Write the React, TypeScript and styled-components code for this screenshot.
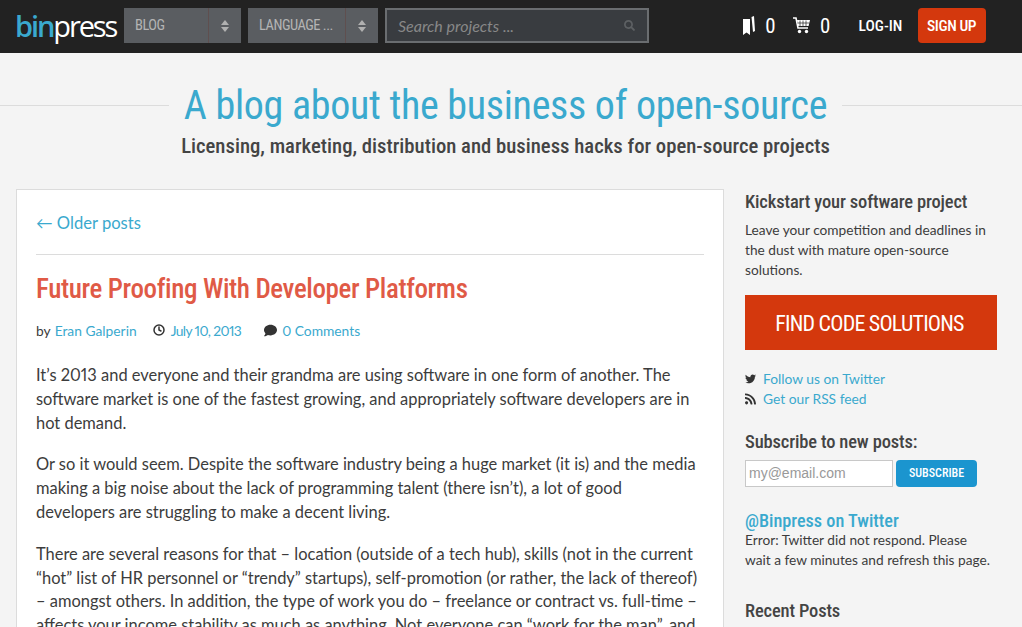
import React from "react";
import styled, { createGlobalStyle } from "styled-components";
import { FaTwitter, FaRss, FaComment, FaSearch } from "react-icons/fa";
import { FiClock } from "react-icons/fi";

const Global = createGlobalStyle`
  html, body { margin: 0; padding: 0; height: 627px; overflow: hidden; background: #f4f4f4; }
  body { font-family: "Lato", "Open Sans", sans-serif; color: #3c3c3c; font-variant-numeric: proportional-nums; font-feature-settings: "pnum"; }
  * { box-sizing: border-box; }
`;
const cond = `"Roboto Condensed", "Liberation Sans Narrow", Roboto, sans-serif`;

const Page = styled.div`width: 1022px; height: 627px; overflow: hidden;`;
const Header = styled.header`height: 53px; background: #222; display: flex; align-items: flex-start; padding: 8px 0 0 15px; white-space: nowrap; > * { flex-shrink: 0; }`;
const Logo = styled.div`font-family: "Open Sans", sans-serif; font-size: 29px; font-weight: 500; line-height: 35px; letter-spacing: -2.1px; color: #fff; width: 109px; span { color: #3aa9ce; font-weight: 600; }`;
const Select = styled.div<{ $w: number }>`
  width: ${(p) => p.$w}px; height: 35px; background: #5a5d61; margin-right: 7px; display: flex;
  font-family: ${cond}; font-size: 14.5px; letter-spacing: -0.5px; color: #b4b4b4; line-height: 35px;
`;
const SelectLabel = styled.div`flex: 1; padding-left: 11px; border-right: 1px solid #5f4f4f;`;
const Arrows = styled.div`width: 32px; display: flex; flex-direction: column; align-items: center; justify-content: center; gap: 2px;`;
const Up = styled.i`width: 0; height: 0; border: 4px solid transparent; border-top: 0; border-bottom: 5px solid #b0b0b0;`;
const Down = styled.i`width: 0; height: 0; border: 4px solid transparent; border-bottom: 0; border-top: 5px solid #b0b0b0;`;
const Search = styled.div`
  width: 264px; height: 35px; background: #393c40; border: 2px solid #6a6d70; display: flex; align-items: center;
  justify-content: space-between; padding: 0 12px 0 11px; color: #888; font-style: italic; font-size: 16px; margin-right: 94px;
  svg { color: #5d6063; }
`;
const Count = styled.div<{ $gap: number; $mr: number }>`display: flex; align-items: center; height: 35px; color: #fff; font-family: ${cond}; font-size: 21px; margin-right: ${(p) => p.$mr}px; gap: ${(p) => p.$gap}px;`;
const Login = styled.div`font-family: ${cond}; font-weight: 500; font-size: 15.5px; color: #fff; line-height: 37px; width: 43px; margin-right: 16px;`;
const Signup = styled.div`width: 68px; height: 35px; border-radius: 4px; background: #d4380d; color: #fff; font-family: ${cond}; font-weight: 500; font-size: 15.5px; letter-spacing: -0.4px; line-height: 37px; text-align: center;`;

const Hero = styled.section`height: 136px; padding-top: 28px; text-align: center;`;
const HeroTitleRow = styled.div`display: flex; align-items: center; height: 48px;`;
const Rule = styled.div<{ $w: number }>`width: ${(p) => p.$w}px; height: 1px; background: #dcdcdc;`;
const HeroTitle = styled.h1`flex: 1; margin: 0; padding-top: 2px; font-family: ${cond}; font-weight: 400; font-size: 40px; letter-spacing: -0.3px; line-height: 48px; color: #3aa9ce; white-space: nowrap;`;
const HeroSub = styled.h2`margin: 0; width: 1011px; font-family: ${cond}; font-weight: 500; font-size: 20.7px; line-height: 34px; color: #444; white-space: nowrap;`;

const Body = styled.div`display: flex; padding-left: 16px; align-items: flex-start;`;
const Card = styled.main`width: 708px; height: 600px; background: #fff; border: 1px solid #dcdcdc; padding: 20px 19px;`;
const Older = styled.a`display: block; font-size: 16.6px; line-height: 26px; color: #3aa9ce; padding-bottom: 18px; border-bottom: 1px solid #dcdcdc;`;
const PostTitle = styled.h3`margin: 16px 0 0; font-family: ${cond}; font-weight: 500; font-size: 27px; letter-spacing: -0.38px; line-height: 36px; color: #e05a46; white-space: nowrap;`;
const Meta = styled.div`display: flex; align-items: center; height: 20px; margin-top: 13px; font-size: 13.8px; color: #3c3c3c; a { color: #3aa9ce; }`;
const MetaItem = styled.span<{ $mr: number; $gap: number }>`display: inline-flex; align-items: center; gap: ${(p) => p.$gap}px; margin-right: ${(p) => p.$mr}px; svg { color: #333; }`;
const DateLink = styled.a`letter-spacing: -0.6px;`;
const Para = styled.p`margin: 24px 0 18px; font-size: 16.45px; line-height: 23.8px; color: #3c3c3c; white-space: nowrap; & + & { margin-top: 18px; }`;

const Side = styled.aside`width: 277px; margin-left: 21px; font-size: 13.7px; line-height: 20px;`;
const SideTitle = styled.h4`margin: 0; font-family: ${cond}; font-weight: 500; font-size: 18.5px; letter-spacing: -0.15px; line-height: 26px; color: #444; white-space: nowrap;`;
const SideText = styled.p<{ $top: number }>`margin: ${(p) => p.$top}px 0 0; color: #3c3c3c; white-space: nowrap;`;
const Cta = styled.div`width: 252px; height: 55px; margin-top: 15px; padding-right: 3px; background: #d4380d; color: #fff; font-family: ${cond}; font-size: 22px; letter-spacing: -0.8px; line-height: 57px; text-align: center;`;
const LinkList = styled.div`margin-top: 19px; margin-bottom: 20px;`;
const LinkRow = styled.div`display: flex; align-items: center; gap: 7px; height: 20px; color: #3aa9ce; font-size: 13.8px; svg { color: #333; width: 11px; }`;
const Form = styled.div`display: flex; gap: 3px; margin-top: 5px;`;
const Input = styled.div`width: 148px; height: 27px; background: #fff; border: 1px solid #c8c8c8; font-family: "Liberation Sans", sans-serif; font-size: 14px; line-height: 25px; color: #999; padding-left: 3px;`;
const Sub = styled.div`width: 81px; height: 27px; border-radius: 4px; background: #1b95cf; color: #fff; font-family: ${cond}; font-weight: 500; font-size: 12px; line-height: 27px; text-align: center;`;
const Blue = styled(SideTitle)`color: #3aa9ce; font-size: 18.2px; letter-spacing: 0; line-height: 20px; margin-top: 24px;`;
const Recent = styled(SideTitle)`margin-top: 28px;`;

const CartIcon = () => (
  <svg width="17" height="17" viewBox="0 0 17 17" fill="none">
    <path d="M0 1h3l2 10h10" stroke="#fff" strokeWidth="1.6" />
    <path d="M4 3h13l-1.4 6H5.2z" fill="#fff" />
    <path d="M7 3.5v5.5M10 3.5v5.5M13 3.5v5.5M4.5 6h12" stroke="#222" strokeWidth="0.7" />
    <circle cx="6.5" cy="14.5" r="1.7" fill="#fff" />
    <circle cx="13.5" cy="14.5" r="1.7" fill="#fff" />
  </svg>
);

export default function App() {
  return (
    <Page>
      <Global />
      <Header>
        <Logo><span>bin</span>press</Logo>
        <Select $w={117}><SelectLabel>BLOG</SelectLabel><Arrows><Up /><Down /></Arrows></Select>
        <Select $w={130}><SelectLabel>LANGUAGE ...</SelectLabel><Arrows><Up /><Down /></Arrows></Select>
        <Search>Search projects ...<FaSearch size={11} /></Search>
        <Count $gap={10} $mr={17}>
          <svg width="12" height="19" viewBox="0 0 12 19" fill="#fff"><path d="M0 3h7v16l-3.5-2.5L0 19zM8.5 1l2.5-1 1 15-2 1z" /></svg>
          0
        </Count>
        <Count $gap={10} $mr={28}><CartIcon />0</Count>
        <Login>LOG-IN</Login>
        <Signup>SIGN UP</Signup>
      </Header>
      <Hero>
        <HeroTitleRow>
          <Rule $w={169} />
          <HeroTitle>A blog about the business of open-source</HeroTitle>
          <Rule $w={180} />
        </HeroTitleRow>
        <HeroSub>Licensing, marketing, distribution and business hacks for open-source projects</HeroSub>
      </Hero>
      <Body>
        <Card>
          <Older>← Older posts</Older>
          <PostTitle>Future Proofing With Developer Platforms</PostTitle>
          <Meta>
            <MetaItem $mr={16} $gap={4}>by <a>Eran Galperin</a></MetaItem>
            <MetaItem $mr={23} $gap={6}><FiClock size={12} strokeWidth={3} /><DateLink>July 10, 2013</DateLink></MetaItem>
            <MetaItem $mr={0} $gap={5}><FaComment size={13} /><a>0 Comments</a></MetaItem>
          </Meta>
          <Para>It’s 2013 and everyone and their grandma are using software in one form of another. The<br />software market is one of the fastest growing, and appropriately software developers are in<br />hot demand.</Para>
          <Para>Or so it would seem. Despite the software industry being a huge market (it is) and the media<br />making a big noise about the lack of programming talent (there isn’t), a lot of good<br />developers are struggling to make a decent living.</Para>
          <Para>There are several reasons for that – location (outside of a tech hub), skills (not in the current<br />“hot” list of HR personnel or “trendy” startups), self-promotion (or rather, the lack of thereof)<br />– amongst others. In addition, the type of work you do – freelance or contract vs. full-time –<br />affects your income stability as much as anything. Not everyone can “work for the man”, and</Para>
        </Card>
        <Side>
          <SideTitle>Kickstart your software project</SideTitle>
          <SideText $top={5}>Leave your competition and deadlines in<br />the dust with mature open-source<br />solutions.</SideText>
          <Cta>FIND CODE SOLUTIONS</Cta>
          <LinkList>
            <LinkRow><FaTwitter />Follow us on Twitter</LinkRow>
            <LinkRow><FaRss />Get our RSS feed</LinkRow>
          </LinkList>
          <SideTitle>Subscribe to new posts:</SideTitle>
          <Form><Input>my@email.com</Input><Sub>SUBSCRIBE</Sub></Form>
          <Blue>@Binpress on Twitter</Blue>
          <SideText $top={-1}>Error: Twitter did not respond. Please<br />wait a few minutes and refresh this page.</SideText>
          <Recent>Recent Posts</Recent>
        </Side>
      </Body>
    </Page>
  );
}
